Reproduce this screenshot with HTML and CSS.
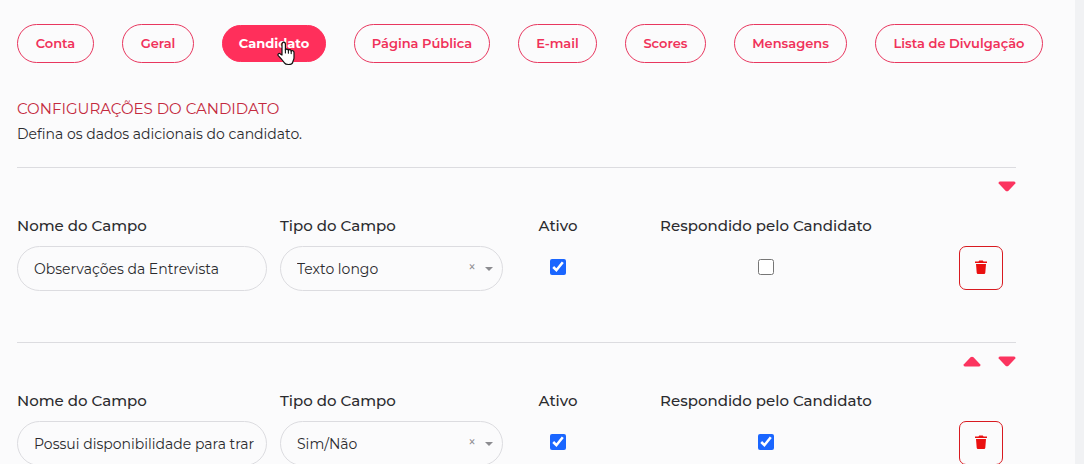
FILE: index.html
```html
<!DOCTYPE html>
<html lang="pt-BR">
<head>
  <meta charset="UTF-8" />
  <meta name="viewport" content="width=device-width, initial-scale=1.0"/>
  <title>Configurações do Candidato</title>
  <link rel="stylesheet" href="styles.css">
</head>
<body>
  <main class="panel">
    <!-- Settings Tabs -->
    <nav class="tabs">
      <a class="tab" href="#conta">Conta</a>
      <a class="tab" href="#geral">Geral</a>
      <a class="tab active" href="#candidato">Candidato
        <svg class="pointer" viewBox="0 0 18 25" aria-hidden="true">
          <path d="M5 14V3.2C5 .4 8.4.4 8.4 3.2V9c.3-1.3 2.7-1.2 3 .4.6-1.2 2.6-.9 2.8.7.8-1 2.8-.5 2.8 1.3V17c0 2-1.3 3-1.3 4.5-.8 2.6-7 2.6-8.3.4C6 19.5 3 16.500 1.2 14.6c-.9-1.800 1-2.700 2.200-1.700z" fill="#fff" stroke="#111" stroke-width="1.2" stroke-linejoin="round"/>
          <path d="M8.4 8.5V12M11.4 9V12.3M14.2 10V12.6" fill="none" stroke="#111" stroke-width="1.1" stroke-linecap="round"/>
        </svg>
      </a>
      <a class="tab" href="#pagina">Página Pública</a>
      <a class="tab" href="#email">E-mail</a>
      <a class="tab" href="#scores">Scores</a>
      <a class="tab" href="#mensagens">Mensagens</a>
      <a class="tab" href="#lista">Lista de Divulgação</a>
    </nav>

    <div class="content">
      <h1>CONFIGURAÇÕES DO CANDIDATO</h1>
      <p class="intro">Defina os dados adicionais do candidato.</p>

      <!-- Field 1 -->
      <section class="field-block">
        <div class="order">
          <button type="button" aria-label="Mover para baixo">
            <svg class="down" viewBox="0 0 18 11"><path d="M2 .5H16Q18 .6 17.3 2.6L10.5 9.7Q9 11 7.5 9.7L.7 2.6Q0 .6 2 .5Z"/></svg>
          </button>
        </div>
        <div class="field-row">
          <div class="cell">
            <label for="nome1">Nome do Campo</label>
            <input class="box" type="text" id="nome1" value="Observações da Entrevista">
          </div>
          <div class="cell">
            <label for="tipo1">Tipo do Campo</label>
            <div class="select-wrap">
              <select class="box" id="tipo1">
                <option>Texto longo</option>
                <option>Sim/Não</option>
              </select>
              <button class="clear" type="button" aria-label="Limpar">×</button>
            </div>
          </div>
          <div class="cell center">
            <label for="ativo1">Ativo</label>
            <input class="check" type="checkbox" id="ativo1" checked>
          </div>
          <div class="cell center">
            <label for="resp1">Respondido pelo Candidato</label>
            <input class="check" type="checkbox" id="resp1">
          </div>
          <button class="delete" type="button" aria-label="Excluir">
            <svg viewBox="0 0 12 14"><path d="M0 1.5H3.5L4.2.5H7.8L8.5 1.5H12V3H0ZM1 4H11L10.3 12.7Q10.2 14 9 14H3Q1.8 14 1.7 12.7Z"/></svg>
          </button>
        </div>
      </section>

      <!-- Field 2 -->
      <section class="field-block">
        <div class="order">
          <button type="button" aria-label="Mover para cima">
            <svg viewBox="0 0 18 11"><path d="M2 10.5H16Q18 10.4 17.3 8.4L10.5 1.3Q9 0 7.5 1.3L.7 8.4Q0 10.4 2 10.5Z"/></svg>
          </button>
          <button type="button" aria-label="Mover para baixo">
            <svg class="down" viewBox="0 0 18 11"><path d="M2 .5H16Q18 .6 17.3 2.6L10.5 9.7Q9 11 7.5 9.7L.7 2.6Q0 .6 2 .5Z"/></svg>
          </button>
        </div>
        <div class="field-row">
          <div class="cell">
            <label for="nome2">Nome do Campo</label>
            <input class="box" type="text" id="nome2" value="Possui disponibilidade para trar">
          </div>
          <div class="cell">
            <label for="tipo2">Tipo do Campo</label>
            <div class="select-wrap">
              <select class="box" id="tipo2">
                <option>Sim/Não</option>
                <option>Texto longo</option>
              </select>
              <button class="clear" type="button" aria-label="Limpar">×</button>
            </div>
          </div>
          <div class="cell center">
            <label for="ativo2">Ativo</label>
            <input class="check" type="checkbox" id="ativo2" checked>
          </div>
          <div class="cell center">
            <label for="resp2">Respondido pelo Candidato</label>
            <input class="check" type="checkbox" id="resp2" checked>
          </div>
          <button class="delete" type="button" aria-label="Excluir">
            <svg viewBox="0 0 12 14"><path d="M0 1.5H3.5L4.2.5H7.8L8.5 1.5H12V3H0ZM1 4H11L10.3 12.7Q10.2 14 9 14H3Q1.8 14 1.7 12.7Z"/></svg>
          </button>
        </div>
      </section>
    </div>
  </main>
</body>
</html>
```
FILE: styles.css
```css
/* Reset and Base Styles */
* {
  margin: 0;
  padding: 0;
  box-sizing: border-box;
}
html {
  overflow: hidden;
}
body {
  font-family: Montserrat, Inter, sans-serif;
  font-size: 14px;
  line-height: 20px;
  color: #2b2b2f;
  background-color: #f1f2f4;
}
button,
input,
select {
  font: inherit;
  color: inherit;
}

/* Page Panel */
.panel {
  min-height: 100vh;
  margin-right: 9px;
  padding: 24px 32px 0 17px;
  background-color: #fbfbfc;
}

/* Tabs */
.tabs {
  display: grid;
  grid-template-columns: 77fr 72fr 104fr 136fr 79fr 81fr 113fr 168fr;
  gap: 28px;
}
.tab {
  position: relative;
  height: 39px;
  padding-bottom: 2px;
  display: flex;
  align-items: center;
  justify-content: center;
  border: 1px solid #e8375f;
  border-radius: 20px;
  color: #f0325a;
  font-size: 13px;
  font-weight: 600;
  white-space: nowrap;
  text-decoration: none;
}
.tab.active {
  height: 37px;
  margin: 1px 0;
  background-color: #ff2f5b;
  border-color: #ff2f5b;
  color: #fff;
  font-weight: 700;
}
.pointer {
  position: absolute;
  left: 54px;
  top: 15px;
  width: 18px;
  height: 25px;
}

/* Heading */
.content {
  margin: 36px 27px 0 0;
}
h1 {
  font-size: 15px;
  line-height: 20px;
  font-weight: 400;
  color: #c42a3e;
}
.intro {
  margin: 5px 0 23px;
}

/* Field Blocks */
.field-block {
  height: 175px;
  border-top: 1px solid #dcdce0;
}
.order {
  display: flex;
  justify-content: flex-end;
  gap: 17px;
  padding-top: 11px;
  height: 48px;
}
.order button {
  width: 18px;
  height: 14px;
  border: none;
  background: none;
}
.order svg {
  display: block;
  width: 18px;
  height: 11px;
  fill: #fb345f;
}
.order .down {
  margin-top: 1px;
}
.field-row {
  display: grid;
  grid-template-columns: 250fr 223fr 84fr 306fr 84fr;
  gap: 13px;
}
.cell {
  display: flex;
  flex-direction: column;
  gap: 10px;
  min-width: 0;
}
.cell.center {
  align-items: center;
}
label {
  font-size: 15px;
  font-weight: 500;
  white-space: nowrap;
}
.box {
  width: 100%;
  height: 45px;
  padding: 0 11px 0 16px;
  border: 1px solid #dcdce0;
  border-radius: 23px;
  background-color: transparent;
}
.select-wrap {
  position: relative;
}
.select-wrap select {
  appearance: none;
}
/* Caret */
.select-wrap::after {
  content: "";
  position: absolute;
  right: 10px;
  top: 21px;
  border: 4px solid transparent;
  border-top-color: #8c8c90;
  border-bottom: none;
  pointer-events: none;
}
.clear {
  position: absolute;
  right: 25px;
  top: 11px;
  width: 12px;
  height: 20px;
  border: none;
  background: none;
  color: #8c8c90;
}
.check {
  width: 16px;
  height: 16px;
  margin-top: 13px;
  accent-color: #1a66ff;
}
.delete {
  display: flex;
  align-items: center;
  justify-content: center;
  justify-self: end;
  width: 44px;
  height: 44px;
  margin: 30px 13px 0 0;
  border: 1px solid #d81a20;
  border-radius: 7px;
  background: none;
}
.delete svg {
  width: 12px;
  height: 14px;
  margin-bottom: 2px;
  fill: #ea1010;
}
```
